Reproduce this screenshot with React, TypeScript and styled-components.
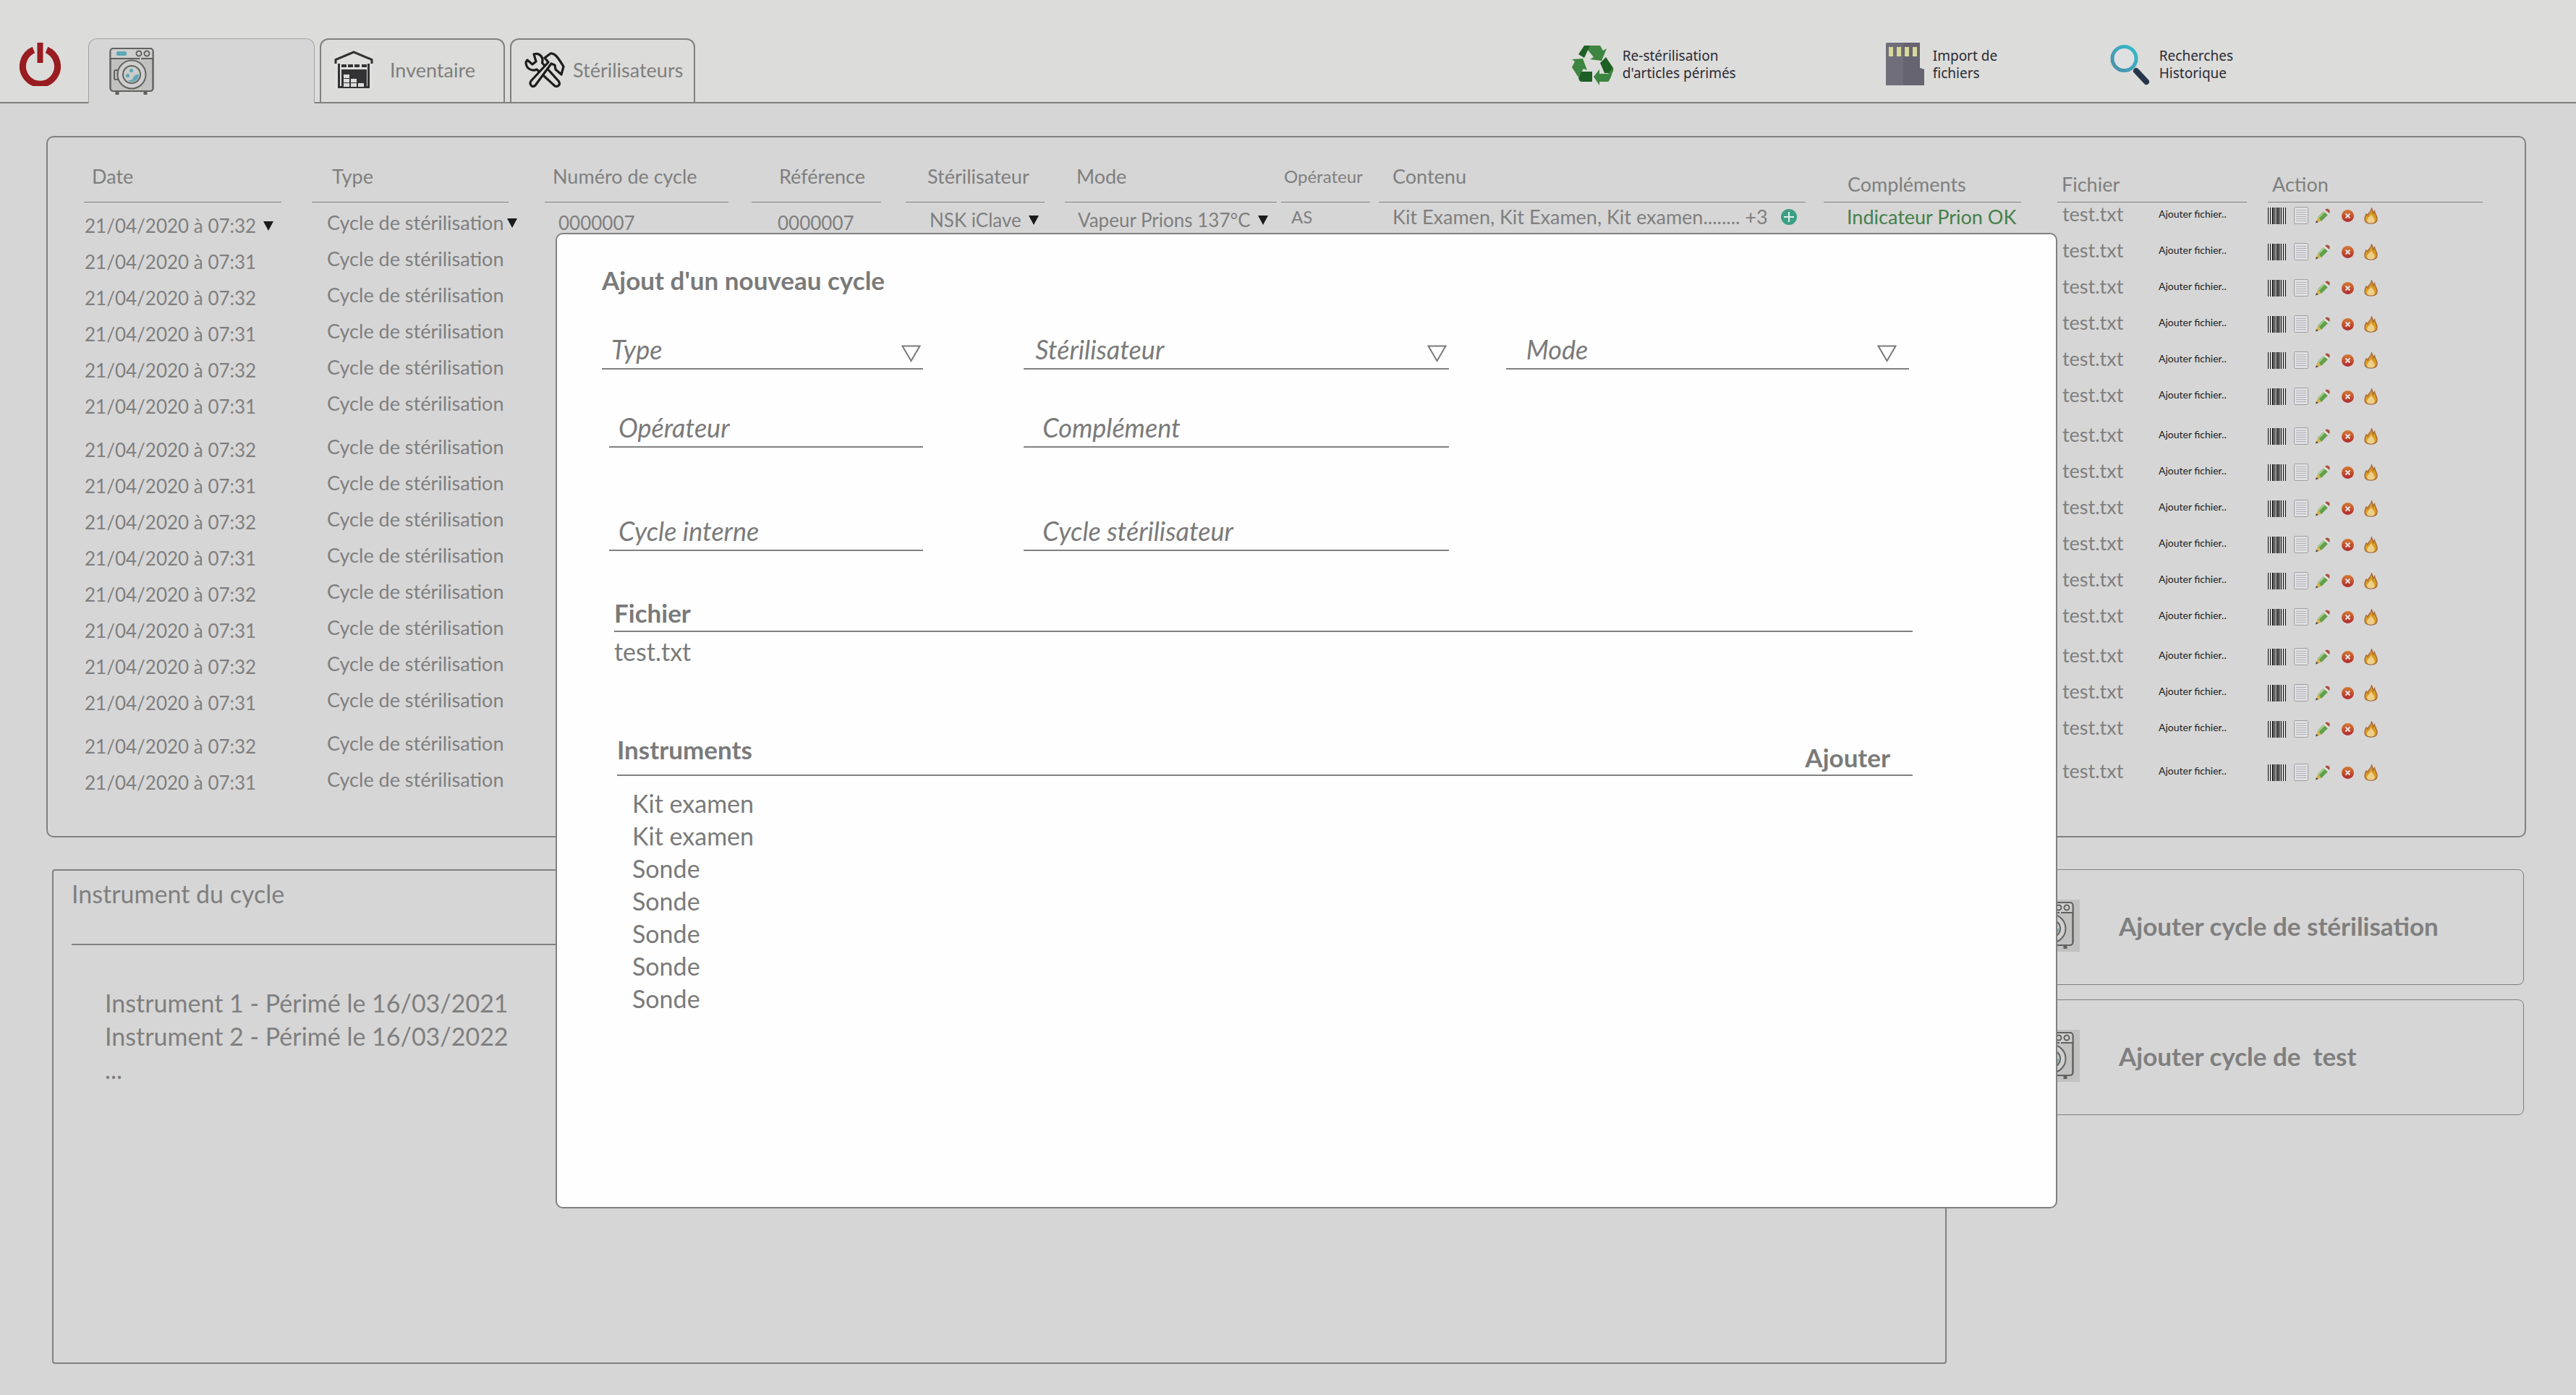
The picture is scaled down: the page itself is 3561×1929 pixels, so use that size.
import React from "react";
import styled, { createGlobalStyle, css } from "styled-components";

const ink = "#7f7f7f";
const rule = "#808080";
const ground = "#d6d6d6";

const GlobalStyle = createGlobalStyle`
  *, *::before, *::after { box-sizing: border-box; }
  body {
    margin: 0;
    background: ${ground};
    color: ${ink};
    font-family: Lato, "Noto Sans", sans-serif;
    font-size: 27px;
    line-height: 32px;
  }
  button, input, select { font: inherit; color: inherit; }
  svg { flex: none; }
`;

const Page = styled.div`
  position: relative;
  display: flex;
  flex-direction: column;
  min-height: 100vh;
`;

const plainButton = css`
  padding: 0;
  border: 0;
  background: none;
  cursor: pointer;
`;

/* ---------- header ---------- */

const Header = styled.header`
  display: flex;
  align-items: flex-end;
  padding: 53px 0 0 27px;
  background: #dcdcda;
  border-bottom: 2px solid ${rule};
`;

const PowerButton = styled.button`
  ${plainButton}
  height: 60px;
  margin: 0 38px 22px 0;
`;

const Tabs = styled.nav`
  display: flex;
  gap: 7px;
`;

const Tab = styled.button<{ $active?: boolean; $width: number; $gap: number }>`
  display: flex;
  align-items: center;
  gap: ${(p) => p.$gap}px;
  width: ${(p) => p.$width}px;
  height: 88px;
  padding: 0 18px 2px;
  border: 2px solid ${rule};
  border-bottom: 0;
  border-radius: 12px 12px 0 0;
  background: none;
  font-size: 27px;
  white-space: nowrap;
  cursor: pointer;
  ${(p) =>
    p.$active &&
    css`
      height: 90px;
      margin-bottom: -2px;
      padding: 0 28px;
      border: 1px solid #a2a2a2;
      border-bottom: 0;
      background: ${ground};
    `}
`;

const Tools = styled.div`
  display: grid;
  grid-template-columns: 435px 310px auto;
  margin-left: auto;
  padding: 0 474px 22px 0;
`;

const Tool = styled.button`
  ${plainButton}
  display: flex;
  align-items: center;
  gap: 12px;
  color: #2b2b35;
  font-family: "Noto Sans", sans-serif;
  font-size: 19px;
  line-height: 24px;
  text-align: left;
  white-space: pre-line;
`;

/* ---------- cycles ---------- */

const Main = styled.main`
  display: flex;
  flex: 1;
  flex-direction: column;
  gap: 44px;
  padding: 45px 69px 43px 64px;
`;

const CyclesPanel = styled.section`
  display: grid;
  grid-template-columns: 587fr 2041fr 588fr;
  gap: 50px;
  align-items: start;
  padding: 38px 58px 56px 50px;
  border: 2px solid ${rule};
  border-radius: 10px;
`;

const Table = styled.table`
  width: 100%;
  table-layout: fixed;
  border-collapse: collapse;
`;

const Th = styled.th<{ $gap?: number }>`
  height: 52px;
  padding: 0 ${(p) => p.$gap ?? 0}px 0 0;
  font-weight: 400;
  text-align: left;
  vertical-align: bottom;
`;

const HeadLabel = styled.div<{ $indent: number; $low?: boolean; $small?: boolean }>`
  padding: 0 0 ${(p) => (p.$low ? 8 : 19)}px ${(p) => p.$indent}px;
  border-bottom: 1px solid ${rule};
  font-size: ${(p) => (p.$small ? 24 : 27)}px;
  white-space: nowrap;
`;

const Group = styled.tbody<{ $before?: number }>`
  &::before {
    content: "";
    display: ${(p) => (p.$before ? "table-row" : "none")};
    height: ${(p) => p.$before ?? 0}px;
  }
`;

const sizes = { small: 24, tight: 26, normal: 27 };

const Td = styled.td<{ $indent?: number; $top?: number; $size?: keyof typeof sizes }>`
  height: 50px;
  padding: ${(p) => p.$top ?? 0}px 0 0 ${(p) => p.$indent ?? 0}px;
  font-size: ${(p) => sizes[p.$size ?? "normal"]}px;
  vertical-align: top;
  white-space: nowrap;
`;

const Inline = styled.div<{ $gap: number }>`
  display: flex;
  align-items: center;
  gap: ${(p) => p.$gap}px;
`;

const CellSelect = styled.select`
  appearance: none;
  field-sizing: content;
  flex: none;
  height: 32px;
  padding: 0;
  border: 0;
  background: none;
`;

const Good = styled.span`
  color: #44804a;
`;

const FileCell = styled.div`
  display: grid;
  grid-template-columns: 133px auto;
  align-items: center;
`;

const AddFile = styled.button`
  ${plainButton}
  color: #1c1c1c;
  font-size: 14px;
  line-height: 20px;
  text-align: left;
`;

const RowActions = styled.div`
  display: grid;
  grid-template-columns: 36px 30px 36px 31px 20px;
  align-items: center;
  height: 36px;
`;

const IconButton = styled.button`
  ${plainButton}
  display: flex;
`;

/* ---------- lower area ---------- */

const Lower = styled.div`
  display: grid;
  flex: 1;
  grid-template-columns: 2619fr 758fr;
  gap: 40px;
  padding: 0 3px 0 8px;
`;

const CyclePanel = styled.section`
  padding: 9px 25px;
  border: 2px solid ${rule};
  border-radius: 4px;
`;

const PanelTitle = styled.h2`
  margin: 0;
  padding-bottom: 46px;
  border-bottom: 2px solid ${rule};
  font-size: 34px;
  font-weight: 400;
  line-height: 46px;
`;

const Lines = styled.ul<{ $top: number; $indent: number; $pitch: number }>`
  margin: 0;
  padding: ${(p) => p.$top}px 0 0 ${(p) => p.$indent}px;
  font-size: 34px;
  line-height: ${(p) => p.$pitch}px;
  list-style: none;
`;

const Cards = styled.div`
  display: flex;
  flex-direction: column;
  gap: 20px;
`;

const Card = styled.button`
  display: flex;
  align-items: center;
  gap: 54px;
  height: 160px;
  padding: 0 65px 4px;
  border: 1px solid ${rule};
  border-radius: 8px;
  background: none;
  font-size: 35px;
  font-weight: 700;
  line-height: 40px;
  white-space: pre;
  cursor: pointer;
`;

const Tile = styled.span`
  display: flex;
  padding: 2px 8px;
  background: #c1c1c1;
`;

/* ---------- dialog ---------- */

const Dialog = styled.section`
  position: absolute;
  top: 322px;
  right: 717px;
  left: 768px;
  padding: 43px 198px 266px 62px;
  border: 2px solid ${rule};
  border-radius: 10px;
  background: #fefefe;
  color: #7a7a7a;
  font-size: 34px;
  line-height: 40px;
`;

const DialogTitle = styled.h1`
  margin: 0;
  font-size: 35px;
  line-height: 40px;
`;

const FieldRow = styled.div<{ $top: number }>`
  display: grid;
  grid-template-columns: 444fr 139fr 587fr 79fr 557fr 5fr;
  margin-top: ${(p) => p.$top}px;
`;

const Field = styled.label<{ $col: number; $inset?: number; $indent: number }>`
  display: flex;
  grid-column: ${(p) => p.$col};
  align-items: flex-end;
  margin-left: ${(p) => p.$inset ?? 0}px;
  padding: 0 0 6px ${(p) => p.$indent}px;
  border-bottom: 2px solid ${rule};
  font-size: 36px;
  font-style: italic;
`;

const TextInput = styled.input`
  width: 100%;
  height: 40px;
  padding: 0;
  border: 0;
  outline: 0;
  background: none;
  &::placeholder { color: #7a7a7a; opacity: 1; }
`;

const FieldSelect = styled.select`
  flex: 1;
  min-width: 0;
  height: 40px;
  padding: 0;
  border: 0;
  appearance: none;
  background: none;
`;

const Section = styled.div<{ $top: number; $indent: number }>`
  margin: ${(p) => p.$top}px 0 0 ${(p) => p.$indent}px;
`;

const SectionHead = styled.div<{ $tall?: boolean }>`
  display: flex;
  justify-content: space-between;
  height: ${(p) => (p.$tall ? 57 : 47)}px;
  border-bottom: 2px solid ${rule};
`;

const SectionTitle = styled.h2`
  margin: 0;
  font-size: 35px;
  line-height: 40px;
`;

const AddButton = styled.button`
  ${plainButton}
  align-self: flex-end;
  padding: 0 31px 4px 0;
  font-size: 35px;
  font-weight: 700;
`;

const FileName = styled.p`
  margin: 7px 0 0;
`;

/* ---------- drawings ---------- */

const Caret = () => (
  <svg width="14" height="13" viewBox="0 0 14 13" aria-hidden="true">
    <path d="M0 0h14L7 13z" fill="#1b1b1b" />
  </svg>
);

const OpenCaret = ({ right = false }: { right?: boolean }) => (
  <svg width={right ? 44 : 30} height="26" viewBox={right ? "0 0 44 26" : "0 0 30 26"} aria-hidden="true">
    <path d="M1.500 1.500h24L13.500 22z" fill="none" stroke="#7a7a7a" strokeWidth="2" />
  </svg>
);

const Power = () => (
  <svg width="57" height="60" viewBox="0 0 57 60" aria-hidden="true">
    <path d="M19.500 10A24 24.500 0 1 0 37.500 10" fill="none" stroke="#981c20" strokeWidth="9" />
    <path d="M28.500 0v28" stroke="#981c20" strokeWidth="8" />
  </svg>
);

const Washer = () => (
  <svg width="62" height="68" viewBox="0 0 62 68" aria-hidden="true">
    <g fill="none" stroke="#62625e" strokeWidth="2">
      <path d="M11 62v4M50 62v4" strokeWidth="5" />
      <rect x="1.500" y="2" width="59" height="59" rx="4" fill="#c1c1c1" />
      <path d="M2 5q0-3 3-3h52q3 0 3 3v11H2z" fill="#cfcfcf" stroke="none" />
      <rect x="1.500" y="2" width="59" height="59" rx="4" />
      <path d="M2 16h40M44 16h16" />
      <circle cx="41" cy="9" r="3.500" />
      <circle cx="52" cy="9" r="3.500" />
      <rect x="7" y="32" width="6" height="13" rx="2" />
      <circle cx="31" cy="38" r="19.500" fill="#cfcfcf" />
      <circle cx="31" cy="38" r="12" fill="#cccccc" />
    </g>
    <g fill="#5fa9b5">
      <rect x="10" y="6" width="14" height="6" rx="2" />
      <circle cx="30.500" cy="32.500" r="2.600" />
      <circle cx="25.500" cy="39.500" r="2.600" />
      <path d="M41 38c0 6-4 10-10 10-2 0-4-.6-5-2 4 0 6-.5 7-3 1-4 4-5 8-5z" />
    </g>
  </svg>
);

const Warehouse = () => (
  <svg width="54" height="54" viewBox="0 0 54 54" aria-hidden="true">
    <rect width="54" height="54" fill="#dfdfdd" />
    <path d="M6.500 18v32.500h41V18M2 18v-5.500L27 2l25 10.500V18" fill="none" stroke="#333335" strokeWidth="3" />
    <path d="M10 19h7v4h-7zM19 19h7v4h-7zM28 19h7v4h-7zM38 19h7v4h-7zM10 26h35v25H10z" fill="#333335" />
    <path d="M13 33h8v5h-8zM13 39h8v5h-8zM23 39h8v5h-8zM13 45h8v5h-8zM23 45h8v5h-8zM33 45h8v5h-8z" fill="#dddddb" />
  </svg>
);

const RepairTools = () => (
  <svg width="56" height="50" viewBox="0 0 56 50" aria-hidden="true">
    <g fill="#dcdcda" stroke="#1d1d1d" strokeWidth="3.200" strokeLinejoin="round">
      <path d="M13 3c5-2 11 1 12 7 0 2 0 3-.5 5L47 40c4 5-2 10-6 6L17 24c-7 3-15-1-15-10l2-3 7 6 5-4z" />
      <path d="M28 8l8-6c5-1 9 3 18 18l-3 11-8-7-1-6-5-2L15 46c-4 4-9-1-6-6l24-26z" />
    </g>
  </svg>
);

const Recycle = () => (
  <svg width="59" height="57" viewBox="0 0 59 57" aria-hidden="true">
    <path d="M18 2h22l4 7 5-3-7 17-16-2 5-3z" fill="#3d8540" />
    <path d="M18 2h8l-8 17-8-5z" fill="#1e5f24" />
    <path d="M48 18l10 15c1 4-1 6-3 7h-9l-6-14z" fill="#1e5f24" />
    <path d="M58 32c1 4-5 20-7 20H39v5L31 45l8-10v6h12z" fill="#3d8540" />
    <path d="M1 21l15-1 6 16-5-2-7 12L1 32l4-8z" fill="#3d8540" />
    <path d="M14 38h15v14H15c-3 0-4-2-5-5z" fill="#1e5f24" />
  </svg>
);

const MemoryCard = () => (
  <svg width="53" height="60" viewBox="0 0 53 60" aria-hidden="true">
    <path d="M1 0h46v35l6 2v22H0V1z" fill="#706e7a" />
    <path d="M24 0h23v35l6 2v22H24z" fill="#666471" />
    <path d="M4 6h6v13H4zM15 6h6v13h-6zM26 6h6v13h-6zM37 6h6v13h-6z" fill="#d9d89b" />
  </svg>
);

const Magnifier = () => (
  <svg width="56" height="57" viewBox="0 0 56 57" aria-hidden="true">
    <defs>
      <linearGradient id="lens" x1="1" y1="0" x2="0" y2="1">
        <stop offset="0" stopColor="#35bccb" />
        <stop offset="1" stopColor="#4b8eaa" />
      </linearGradient>
    </defs>
    <path d="M36 37l14 15" stroke="#26364a" strokeWidth="8" strokeLinecap="round" />
    <circle cx="19.500" cy="20" r="16.500" fill="#dfe0e2" stroke="url(#lens)" strokeWidth="5" />
  </svg>
);

const PlusBadge = () => (
  <svg width="22" height="22" viewBox="0 0 22 22" aria-hidden="true">
    <circle cx="11" cy="11" r="11" fill="#3a9f85" />
    <path d="M11 4v14M4 11h14" stroke="#e2efeb" strokeWidth="2" />
  </svg>
);

const Barcode = () => (
  <svg width="25" height="23" viewBox="0 0 25 23" aria-hidden="true">
    <path
      d="M0 0h1v23H0zM3 0h1v23H3zM6 0h2v23H6zM9 0h1v23H9zM11 0h1v23h-1zM13 0h2v23h-2zM16 0h1v23h-1zM18 0h1v23h-1zM21 0h1v23h-1zM24 0h1v23h-1z"
      fill="#111111"
    />
  </svg>
);

const Sheet = () => (
  <svg width="20" height="24" viewBox="0 0 20 24" aria-hidden="true">
    <rect x=".5" y=".5" width="19" height="23" rx="1" fill="#e0e0e2" stroke="#9f9fa2" />
    <path d="M3 4.500h14M3 7.500h14M3 10.500h14M3 13.500h14M3 16.500h14M3 19.500h14" stroke="#b0b0ba" />
  </svg>
);

const Pencil = () => (
  <svg width="20" height="21" viewBox="0 0 20 21" aria-hidden="true">
    <path d="M0 20.500l3-8 5 5z" fill="#dcb548" />
    <path d="M3 12L11 4l6 5-9 9z" fill="#62a04a" />
    <path d="M3 12L11 4l2 1.500-8.500 8.500z" fill="#a5cb90" />
    <path d="M11 4l2-2 6 5-2 2z" fill="#e2dfdf" />
    <path d="M13 2q3-3 6 0 1 2 0 5z" fill="#a9503f" />
    <path d="M0 20.500l1-3.500 3 2z" fill="#484848" />
  </svg>
);

const Remove = () => (
  <svg width="17" height="17" viewBox="0 0 17 17" aria-hidden="true">
    <defs>
      <linearGradient id="remove" x2="0" y2="1">
        <stop offset="0" stopColor="#d47b34" />
        <stop offset="1" stopColor="#b1282c" />
      </linearGradient>
    </defs>
    <circle cx="8.500" cy="8.500" r="8.500" fill="url(#remove)" />
    <path d="M5.500 5.500l6 6M11.500 5.500l-6 6" stroke="#ece2de" strokeWidth="2" />
  </svg>
);

const Flame = () => (
  <svg width="19" height="23" viewBox="0 0 19 23" aria-hidden="true">
    <path
      d="M10.500 1c1.500 3 2 4 2 7l2-3c0 3 4 7 3.500 11 0 4-3 6-8.500 6S1 20 1 16c0-3 1-5 2-7l2 2c1-4 5-5 5.500-10z"
      fill="#d99a22"
      stroke="#a8683a"
      strokeWidth="1.400"
    />
    <path d="M9.500 9c1 3 5 5 5 8.500 0 3-1.500 4-5 4s-5.500-1-5.500-4c0-3 5-5 5.500-8.500z" fill="#ecd08a" />
  </svg>
);

/* ---------- data ---------- */

const cycleGroups = [
  { before: 0, count: 6 },
  { before: 10, count: 8 },
  { before: 10, count: 2 },
];

const fileGroups = [
  { before: 0, count: 6 },
  { before: 5, count: 6 },
  { before: 5, count: 3 },
  { before: 10, count: 1 },
];

const details = [
  { name: "Numéro de cycle", width: 286, gap: 32, indent: 11 },
  { name: "Référence", width: 213, gap: 34, indent: 38 },
  { name: "Stérilisateur", width: 220, gap: 28, indent: 30 },
  { name: "Mode", width: 299, gap: 6, indent: 16 },
  { name: "Opérateur", width: 135, gap: 12, indent: 4, small: true },
  { name: "Contenu", width: 615, gap: 25, indent: 19 },
  { name: "Compléments", width: 273, gap: 0, indent: 33, low: true },
];
const detailsWidth = details.reduce((sum, d) => sum + d.width, 0);

const instruments = ["Kit examen", "Kit examen", "Sonde", "Sonde", "Sonde", "Sonde", "Sonde"];

const times = (n: number) => Array.from({ length: n }, (_, i) => i);

const CellPicker = ({ label, value, gap = 10 }: { label: string; value: string; gap?: number }) => (
  <Inline $gap={gap}>
    <CellSelect aria-label={label} defaultValue={value}>
      <option>{value}</option>
    </CellSelect>
    <Caret />
  </Inline>
);

const CycleTable = () => (
  <Table>
    <colgroup>
      <col style={{ width: `${(315 / 587) * 100}%` }} />
      <col />
    </colgroup>
    <thead>
      <tr>
        <Th $gap={42}><HeadLabel $indent={11}>Date</HeadLabel></Th>
        <Th><HeadLabel $indent={28}>Type</HeadLabel></Th>
      </tr>
    </thead>
    {cycleGroups.map((group, g) => (
      <Group key={g} $before={group.before}>
        {times(group.count).map((i) => {
          const date = `21/04/2020 à 07:${i % 2 ? "31" : "32"}`;
          const first = g === 0 && i === 0;
          return (
            <tr key={i}>
              <Td $indent={1} $top={16} $size="tight">
                {first ? <CellPicker label="Date" value={date} /> : date}
              </Td>
              <Td $indent={21} $top={12}>
                {first ? <CellPicker label="Type" value="Cycle de stérilisation" gap={4} /> : "Cycle de stérilisation"}
              </Td>
            </tr>
          );
        })}
      </Group>
    ))}
  </Table>
);

const DetailTable = () => (
  <Table>
    <colgroup>
      {details.map((d) => (
        <col key={d.name} style={{ width: `${(d.width / detailsWidth) * 100}%` }} />
      ))}
    </colgroup>
    <thead>
      <tr>
        {details.map((d) => (
          <Th key={d.name} $gap={d.gap}>
            <HeadLabel $indent={d.indent} $low={d.low} $small={d.small}>{d.name}</HeadLabel>
          </Th>
        ))}
      </tr>
    </thead>
    <tbody>
      <tr>
        <Td $indent={19} $top={12} $size="tight">0000007</Td>
        <Td $indent={36} $top={12} $size="tight">0000007</Td>
        <Td $indent={33} $top={8} $size="tight"><CellPicker label="Stérilisateur" value="NSK iClave" /></Td>
        <Td $indent={18} $top={8} $size="tight"><CellPicker label="Mode" value="Vapeur Prions 137°C" /></Td>
        <Td $indent={14} $top={4} $size="small">AS</Td>
        <Td $indent={19} $top={4}>
          <Inline $gap={18}>
            Kit Examen, Kit Examen, Kit examen........ +3
            <IconButton aria-label="Voir tout le contenu"><PlusBadge /></IconButton>
          </Inline>
        </Td>
        <Td $indent={32} $top={4}><Good>Indicateur Prion OK</Good></Td>
      </tr>
    </tbody>
  </Table>
);

const FileTable = () => (
  <Table>
    <colgroup>
      <col style={{ width: `${(291 / 588) * 100}%` }} />
      <col />
    </colgroup>
    <thead>
      <tr>
        <Th $gap={29}><HeadLabel $indent={6} $low>Fichier</HeadLabel></Th>
        <Th><HeadLabel $indent={6} $low>Action</HeadLabel></Th>
      </tr>
    </thead>
    {fileGroups.map((group, g) => (
      <Group key={g} $before={group.before}>
        {times(group.count).map((i) => (
          <tr key={i}>
            <Td $indent={7}>
              <FileCell>
                test.txt
                <AddFile>Ajouter fichier..</AddFile>
              </FileCell>
            </Td>
            <Td>
              <RowActions>
                <IconButton aria-label="Code-barres"><Barcode /></IconButton>
                <IconButton aria-label="Détail"><Sheet /></IconButton>
                <IconButton aria-label="Modifier"><Pencil /></IconButton>
                <IconButton aria-label="Supprimer"><Remove /></IconButton>
                <IconButton aria-label="Stériliser"><Flame /></IconButton>
              </RowActions>
            </Td>
          </tr>
        ))}
      </Group>
    ))}
  </Table>
);

const NewCycleDialog = () => (
  <Dialog role="dialog" aria-labelledby="new-cycle">
    <DialogTitle id="new-cycle">Ajout d'un nouveau cycle</DialogTitle>
    <FieldRow $top={56}>
      <Field $col={1} $indent={13}>
        <FieldSelect aria-label="Type"><option>Type</option></FieldSelect>
        <OpenCaret />
      </Field>
      <Field $col={3} $indent={16}>
        <FieldSelect aria-label="Stérilisateur"><option>Stérilisateur</option></FieldSelect>
        <OpenCaret />
      </Field>
      <Field $col={5} $indent={28}>
        <FieldSelect aria-label="Mode"><option>Mode</option></FieldSelect>
        <OpenCaret right />
      </Field>
    </FieldRow>
    <FieldRow $top={60}>
      <Field $col={1} $inset={10} $indent={13}><TextInput aria-label="Opérateur" placeholder="Opérateur" /></Field>
      <Field $col={3} $indent={26}><TextInput aria-label="Complément" placeholder="Complément" /></Field>
    </FieldRow>
    <FieldRow $top={95}>
      <Field $col={1} $inset={10} $indent={13}><TextInput aria-label="Cycle interne" placeholder="Cycle interne" /></Field>
      <Field $col={3} $indent={26}><TextInput aria-label="Cycle stérilisateur" placeholder="Cycle stérilisateur" /></Field>
    </FieldRow>
    <Section $top={65} $indent={17}>
      <SectionHead><SectionTitle>Fichier</SectionTitle></SectionHead>
      <FileName>test.txt</FileName>
    </Section>
    <Section $top={95} $indent={21}>
      <SectionHead $tall>
        <SectionTitle>Instruments</SectionTitle>
        <AddButton>Ajouter</AddButton>
      </SectionHead>
      <Lines $top={15} $indent={21} $pitch={45}>
        {instruments.map((name, i) => <li key={i}>{name}</li>)}
      </Lines>
    </Section>
  </Dialog>
);

export default function App() {
  return (
    <>
      <GlobalStyle />
      <Page>
        <Header>
          <PowerButton aria-label="Quitter"><Power /></PowerButton>
          <Tabs>
            <Tab $active $width={313} $gap={0} aria-label="Cycles"><Washer /></Tab>
            <Tab $width={256} $gap={23}><Warehouse />Inventaire</Tab>
            <Tab $width={256} $gap={11}><RepairTools />Stérilisateurs</Tab>
          </Tabs>
          <Tools>
            <Tool><Recycle />{"Re-stérilisation\nd'articles périmés"}</Tool>
            <Tool><MemoryCard />{"Import de\nfichiers"}</Tool>
            <Tool><Magnifier />{"Recherches\nHistorique"}</Tool>
          </Tools>
        </Header>
        <Main>
          <CyclesPanel>
            <CycleTable />
            <DetailTable />
            <FileTable />
          </CyclesPanel>
          <Lower>
            <CyclePanel>
              <PanelTitle>Instrument du cycle</PanelTitle>
              <Lines $top={57} $indent={46} $pitch={46}>
                <li>Instrument 1 - Périmé le 16/03/2021</li>
                <li>Instrument 2 - Périmé le 16/03/2022</li>
                <li>...</li>
              </Lines>
            </CyclePanel>
            <Cards>
              <Card><Tile><Washer /></Tile>Ajouter cycle de stérilisation</Card>
              <Card><Tile><Washer /></Tile>{"Ajouter cycle de  test"}</Card>
            </Cards>
          </Lower>
        </Main>
        <NewCycleDialog />
      </Page>
    </>
  );
}
